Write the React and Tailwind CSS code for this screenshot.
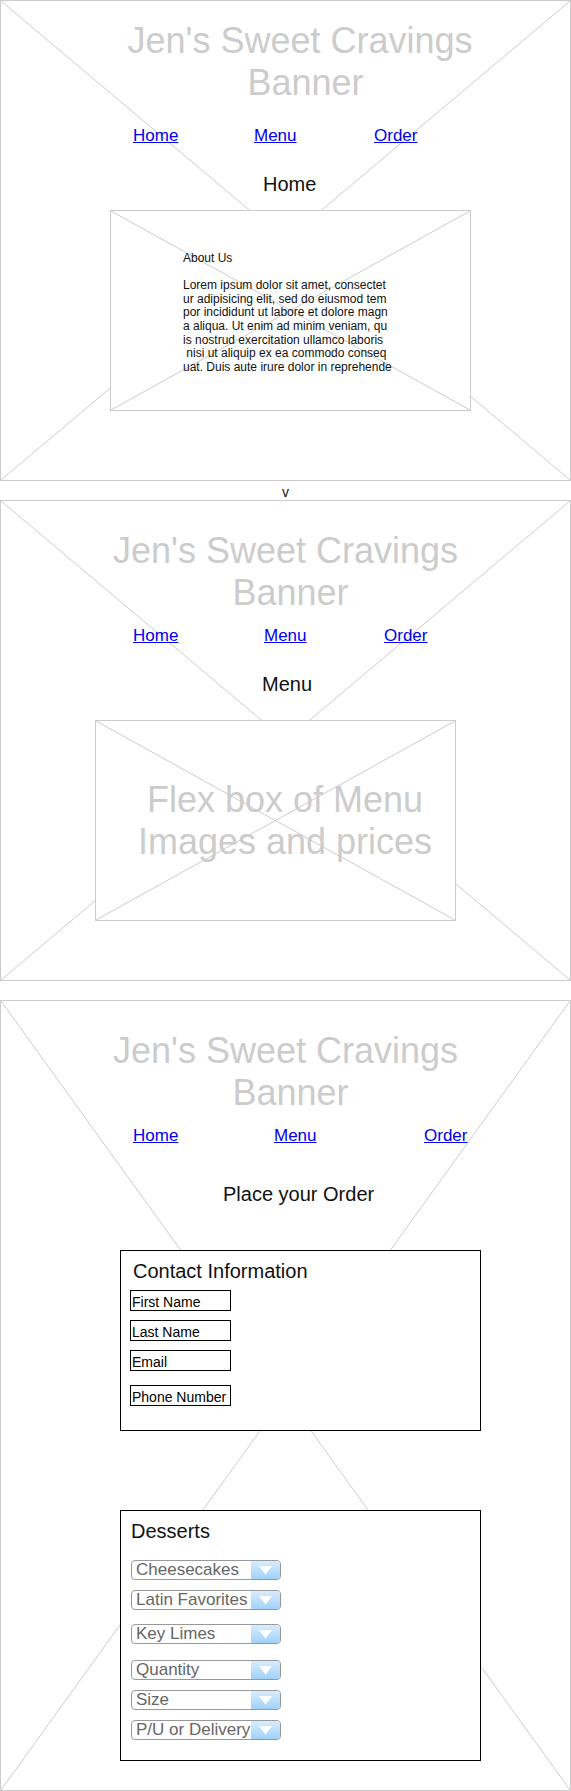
import React from 'react';

/**
 * Wireframe of Jen's Sweet Cravings: three page frames (Home, Menu, Order)
 * with the classic "placeholder X" drawn across each box.
 */

const LOREM = [
  'Lorem ipsum dolor sit amet, consectet',
  'ur adipisicing elit, sed do eiusmod tem',
  'por incididunt ut labore et dolore magn',
  'a aliqua. Ut enim ad minim veniam, qu',
  'is nostrud exercitation ullamco laboris',
  ' nisi ut aliquip ex ea commodo conseq',
  'uat. Duis aute irure dolor in reprehende',
];

function CrossLines() {
  return (
    <svg
      className="absolute inset-0 h-full w-full"
      viewBox="0 0 100 100"
      preserveAspectRatio="none"
      aria-hidden="true"
    >
      <line x1="0" y1="0" x2="100" y2="100" stroke="#cccccc" strokeWidth="1" vectorEffect="non-scaling-stroke" />
      <line x1="100" y1="0" x2="0" y2="100" stroke="#cccccc" strokeWidth="1" vectorEffect="non-scaling-stroke" />
    </svg>
  );
}

function Banner({ firstPad, secondPad }) {
  return (
    <div className="relative text-center text-[36px] leading-[42px] text-[#cccccc]">
      <div className={firstPad}>Jen's Sweet Cravings</div>
      <div className={secondPad}>Banner</div>
    </div>
  );
}

function Nav({ className, homeW, menuW }) {
  return (
    <nav className={`relative flex pl-[132px] text-[17px] leading-[20px] text-[#0000ee] ${className}`}>
      <div className={homeW}><a href="#home" className="underline">Home</a></div>
      <div className={menuW}><a href="#menu" className="underline">Menu</a></div>
      <div><a href="#order" className="underline">Order</a></div>
    </nav>
  );
}

function TextField({ label, className = '' }) {
  return (
    <div className={`h-[21px] w-[101px] border border-black pl-[1px] pt-[3px] text-[14px] leading-[16px] text-black whitespace-nowrap ${className}`}>
      {label}
    </div>
  );
}

function SelectBox({ label, className = '' }) {
  return (
    <div className={`flex h-[20px] w-[150px] overflow-hidden rounded-[4px] border border-[#999999] bg-white ${className}`}>
      <span className="flex-1 overflow-hidden whitespace-nowrap pl-[4px] text-[17px] leading-[18px] text-[#666666]">
        {label}
      </span>
      <span className="flex w-[29px] shrink-0 items-center justify-center bg-gradient-to-b from-[#d8edfd] to-[#a0d2f9]">
        <svg width="15" height="10" viewBox="0 0 15 10" aria-hidden="true">
          <path d="M1 1 L14 1 L7.5 9.5 Z" fill="#ffffff" />
        </svg>
      </span>
    </div>
  );
}

export default function App() {
  return (
    <div className="w-full bg-white font-['Liberation_Sans',Arial,Helvetica,sans-serif]">
      {/* ── Frame 1: Home ─────────────────────────────────────────── */}
      <section className="relative h-[481px] border border-[#cccccc]">
        <CrossLines />
        <div className="relative pt-[19px]">
          <Banner firstPad="pl-[29px]" secondPad="pl-[40px]" />
          <Nav className="mt-[22px]" homeW="w-[121px]" menuW="w-[120px]" />
          <h2 className="relative mt-[26px] pl-[262px] text-[20px] leading-[24px] text-[#111111]">Home</h2>
          <div className="relative ml-[109px] mt-[14px] h-[201px] w-[361px] border border-[#cccccc] bg-white">
            <CrossLines />
            <div className="relative pl-[72px] pt-[41px] text-[12px] leading-[13.6px] text-[#111111]">
              <div>About Us</div>
              <div className="h-[13.6px]" />
              {LOREM.map((line) => (
                <div key={line} className="whitespace-pre">{line}</div>
              ))}
            </div>
          </div>
        </div>
      </section>

      <div className="flex h-[19px] items-end justify-center text-[14px] leading-[16px] text-[#111111]">v</div>

      {/* ── Frame 2: Menu ─────────────────────────────────────────── */}
      <section className="relative h-[481px] border border-[#cccccc]">
        <CrossLines />
        <div className="relative pt-[29px]">
          <Banner firstPad="" secondPad="pl-[10px]" />
          <Nav className="mt-[12px]" homeW="w-[131px]" menuW="w-[120px]" />
          <h2 className="relative mt-[26px] pl-[261px] text-[20px] leading-[24px] text-[#111111]">Menu</h2>
          <div className="relative ml-[94px] mt-[24px] flex h-[201px] w-[361px] items-center justify-center border border-[#cccccc] bg-white pl-[19px]">
            <CrossLines />
            <p className="relative text-center text-[36px] leading-[42px] text-[#cccccc]">
              Flex box of Menu
              <br />
              Images and prices
            </p>
          </div>
        </div>
      </section>

      <div className="h-[19px]" />

      {/* ── Frame 3: Order ────────────────────────────────────────── */}
      <section className="relative h-[791px] border border-[#cccccc]">
        <CrossLines />
        <div className="relative pt-[29px]">
          <Banner firstPad="" secondPad="pl-[10px]" />
          <Nav className="mt-[12px]" homeW="w-[141px]" menuW="w-[150px]" />
          <h2 className="relative mt-[36px] pl-[222px] text-[20px] leading-[24px] text-[#111111]">Place your Order</h2>

          {/* Contact information */}
          <div className="relative ml-[119px] mt-[44px] h-[181px] w-[361px] border border-black bg-white pl-[9px] pt-[8px]">
            <h3 className="ml-[3px] text-[20px] leading-[24px] text-[#111111]">Contact Information</h3>
            <div className="mt-[7px] flex flex-col">
              <TextField label="First Name" />
              <TextField label="Last Name" className="mt-[9px]" />
              <TextField label="Email" className="mt-[9px]" />
              <TextField label="Phone Number" className="mt-[14px]" />
            </div>
          </div>

          {/* Desserts */}
          <div className="relative ml-[119px] mt-[79px] h-[251px] w-[361px] border border-black bg-white pl-[10px] pt-[8px]">
            <h3 className="text-[20px] leading-[24px] text-[#111111]">Desserts</h3>
            <div className="mt-[17px] flex flex-col">
              <SelectBox label="Cheesecakes" />
              <SelectBox label="Latin Favorites" className="mt-[10px]" />
              <SelectBox label="Key Limes" className="mt-[14px]" />
              <SelectBox label="Quantity" className="mt-[16px]" />
              <SelectBox label="Size" className="mt-[10px]" />
              <SelectBox label="P/U or Delivery" className="mt-[10px]" />
            </div>
          </div>
        </div>
      </section>
    </div>
  );
}
